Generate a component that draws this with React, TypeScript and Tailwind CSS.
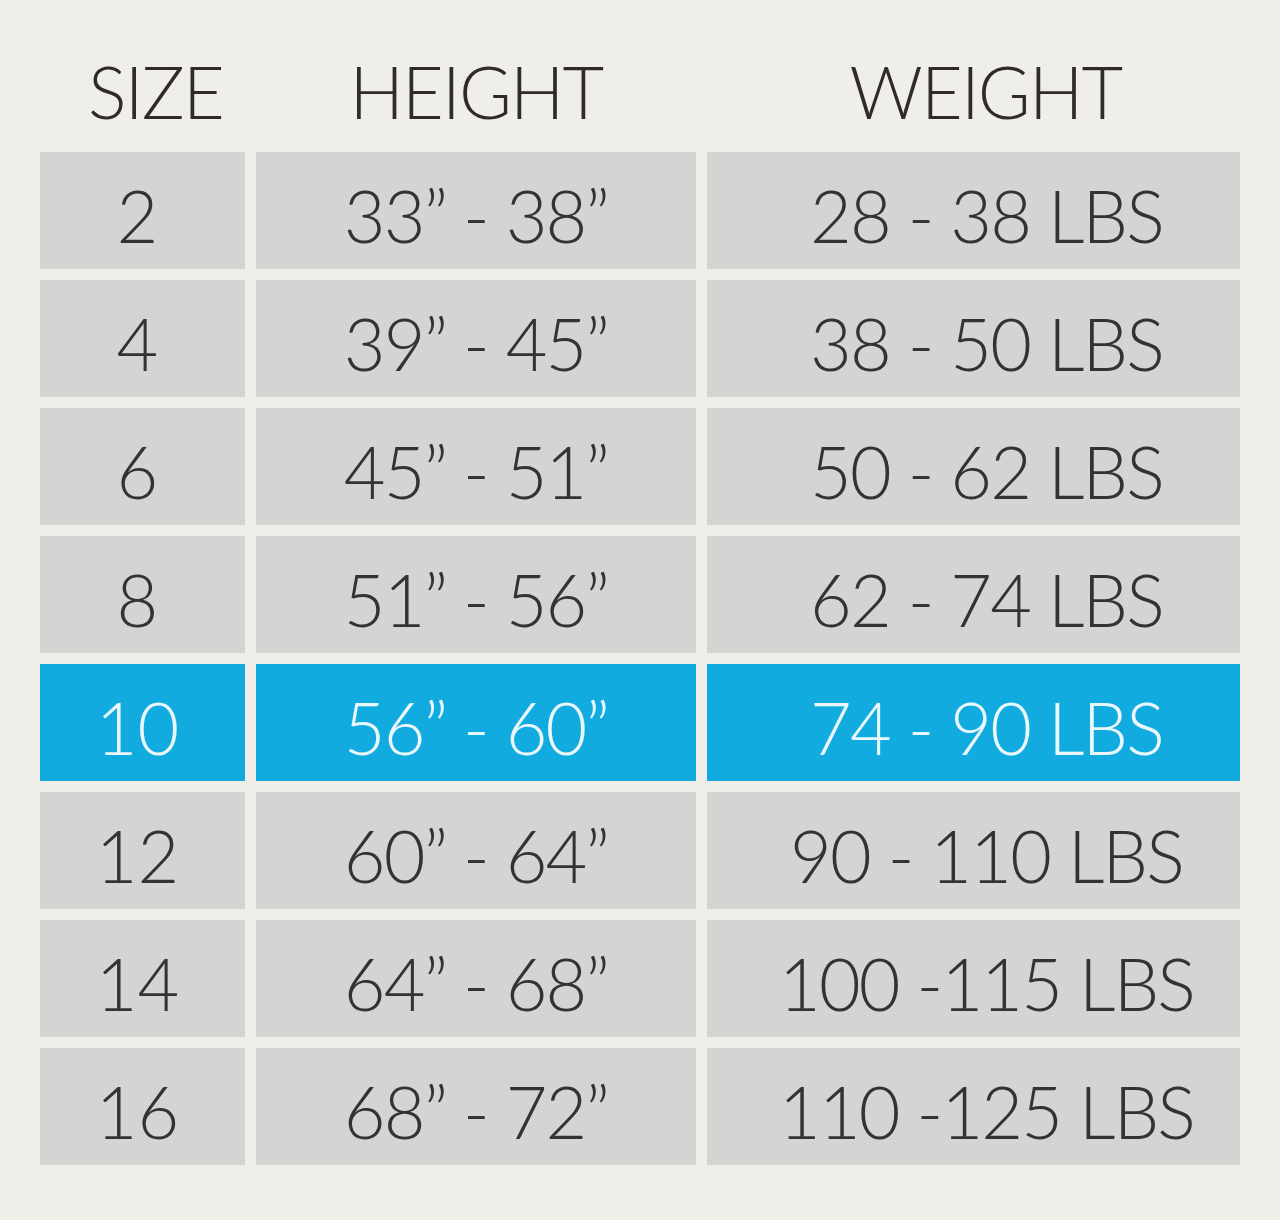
const rows: { size: string; height: string; weight: string; active?: boolean }[] = [
  { size: "2", height: "33” - 38”", weight: "28 - 38 LBS" },
  { size: "4", height: "39” - 45”", weight: "38 - 50 LBS" },
  { size: "6", height: "45” - 51”", weight: "50 - 62 LBS" },
  { size: "8", height: "51” - 56”", weight: "62 - 74 LBS" },
  { size: "10", height: "56” - 60”", weight: "74 - 90 LBS", active: true },
  { size: "12", height: "60” - 64”", weight: "90 - 110 LBS" },
  { size: "14", height: "64” - 68”", weight: "100 -115 LBS" },
  { size: "16", height: "68” - 72”", weight: "110 -125 LBS" },
];

export default function App() {
  const cell = (active?: boolean) =>
    active
      ? "flex items-center justify-center bg-[#12abe0] text-[#eaf7fc]"
      : "flex items-center justify-center bg-[#d4d4d2] text-[#363233]";

  return (
    <div
      className="w-[1280px] h-[1220px] bg-[#efeee9] px-10 pt-[40px]"
      style={{ fontFamily: "Lato, 'Noto Sans', sans-serif" }}
    >
      <div className="grid grid-cols-[205px_440px_533px] gap-x-[11px] gap-y-[11px] font-light leading-none">
        <div className="h-[101px] flex items-center justify-center pl-[26px] text-[72px] text-[#2f2a2c] tracking-tight">SIZE</div>
        <div className="h-[101px] flex items-center justify-center text-[72px] text-[#2f2a2c] tracking-tight">HEIGHT</div>
        <div className="h-[101px] flex items-center justify-center pl-[24px] text-[72px] text-[#2f2a2c] tracking-tight">WEIGHT</div>
        {rows.map((r) => (
          <div key={r.size} className="contents">
            <div className={cell(r.active) + " h-[117px] text-[72px] pr-[10px] pt-[8px]"}>{r.size}</div>
            <div className={cell(r.active) + " h-[117px] text-[72px] tracking-tight pt-[8px]"}>{r.height}</div>
            <div className={cell(r.active) + " h-[117px] text-[72px] tracking-tight pl-[26px] pt-[8px]"}>{r.weight}</div>
          </div>
        ))}
      </div>
    </div>
  );
}
